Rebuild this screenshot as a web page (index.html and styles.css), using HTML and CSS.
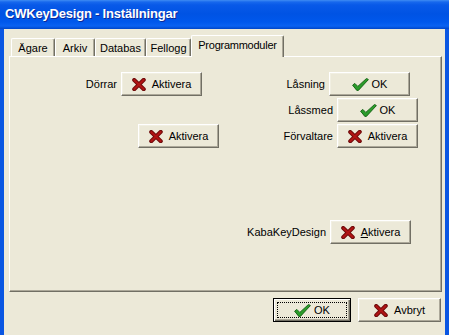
FILE: index.html
```html
<!DOCTYPE html>
<html lang="sv">
<head>
<meta charset="UTF-8" />
<meta name="viewport" content="width=device-width, initial-scale=1" />
<title>CWKeyDesign - Inställningar</title>
<link rel="stylesheet" href="styles.css">
</head>
<body>
  <div class="window">
    <div class="titlebar">CWKeyDesign - Inställningar</div>

    <div class="client">
      <div class="tabs">
        <div class="tab tab-agare">Ägare</div>
        <div class="tab tab-arkiv">Arkiv</div>
        <div class="tab tab-databas">Databas</div>
        <div class="tab tab-fellogg">Fellogg</div>
        <div class="tab tab-moduler active">Programmoduler</div>
      </div>

      <div class="panel">
        <div class="col col-left">
          <div class="field f-dorrar">
            <span class="label">Dörrar</span>
            <button class="btn"><svg class="ico-x" width="14" height="13" viewBox="0 0 14 13"><path d="M2.2 2 L11.8 11.2 M11.8 1.8 L2.2 11.2" stroke="#6e0b0b" stroke-width="4" stroke-linecap="round"/><path d="M2.4 2.2 L11.6 11 M11.6 2 L2.4 11" stroke="#b01414" stroke-width="2.2" stroke-linecap="round"/></svg>Aktivera</button>
          </div>
          <div class="field f-lone">
            <button class="btn"><svg class="ico-x" width="14" height="13" viewBox="0 0 14 13"><path d="M2.2 2 L11.8 11.2 M11.8 1.8 L2.2 11.2" stroke="#6e0b0b" stroke-width="4" stroke-linecap="round"/><path d="M2.4 2.2 L11.6 11 M11.6 2 L2.4 11" stroke="#b01414" stroke-width="2.2" stroke-linecap="round"/></svg>Aktivera</button>
          </div>
        </div>

        <div class="col col-right">
          <div class="field f-lasning">
            <span class="label">Låsning</span>
            <button class="btn btn-ok"><svg class="ico-check" width="17" height="13" viewBox="0 0 17 13"><polygon points="0.6,7.2 2.8,5.4 5.8,8.4 14.6,0.4 16.4,1.6 6.4,12.4 4.8,12.4" fill="#2a9c2a" stroke="#115d11" stroke-width="0.9" stroke-linejoin="round"/></svg>OK</button>
          </div>
          <div class="field f-lassmed">
            <span class="label">Låssmed</span>
            <button class="btn btn-ok"><svg class="ico-check" width="17" height="13" viewBox="0 0 17 13"><polygon points="0.6,7.2 2.8,5.4 5.8,8.4 14.6,0.4 16.4,1.6 6.4,12.4 4.8,12.4" fill="#2a9c2a" stroke="#115d11" stroke-width="0.9" stroke-linejoin="round"/></svg>OK</button>
          </div>
          <div class="field f-forvaltare">
            <span class="label">Förvaltare</span>
            <button class="btn"><svg class="ico-x" width="14" height="13" viewBox="0 0 14 13"><path d="M2.2 2 L11.8 11.2 M11.8 1.8 L2.2 11.2" stroke="#6e0b0b" stroke-width="4" stroke-linecap="round"/><path d="M2.4 2.2 L11.6 11 M11.6 2 L2.4 11" stroke="#b01414" stroke-width="2.2" stroke-linecap="round"/></svg>Aktivera</button>
          </div>
          <div class="field f-kaba">
            <span class="label">KabaKeyDesign</span>
            <button class="btn"><svg class="ico-x" width="14" height="13" viewBox="0 0 14 13"><path d="M2.2 2 L11.8 11.2 M11.8 1.8 L2.2 11.2" stroke="#6e0b0b" stroke-width="4" stroke-linecap="round"/><path d="M2.4 2.2 L11.6 11 M11.6 2 L2.4 11" stroke="#b01414" stroke-width="2.2" stroke-linecap="round"/></svg><span><u>A</u>ktivera</span></button>
          </div>
        </div>
      </div>

      <div class="actions">
        <button class="btn btn-default"><span class="focus"><svg class="ico-check" width="17" height="13" viewBox="0 0 17 13"><polygon points="0.6,7.2 2.8,5.4 5.8,8.4 14.6,0.4 16.4,1.6 6.4,12.4 4.8,12.4" fill="#2a9c2a" stroke="#115d11" stroke-width="0.9" stroke-linejoin="round"/></svg>OK</span></button>
        <button class="btn btn-cancel"><svg class="ico-x" width="14" height="13" viewBox="0 0 14 13"><path d="M2.2 2 L11.8 11.2 M11.8 1.8 L2.2 11.2" stroke="#6e0b0b" stroke-width="4" stroke-linecap="round"/><path d="M2.4 2.2 L11.6 11 M11.6 2 L2.4 11" stroke="#b01414" stroke-width="2.2" stroke-linecap="round"/></svg>Avbryt</button>
      </div>
    </div>
  </div>
</body>
</html>
```

FILE: styles.css
```css
/* Base */
* {
  box-sizing: border-box;
}
html, body {
  margin: 0;
  padding: 0;
  width: 449px;
  height: 335px;
  overflow: hidden;
  background: #ece9d8;
}
body {
  font-family: 'Liberation Sans', Arial, sans-serif;
  font-size: 11px;
  color: #000;
}

/* Window frame */
.window {
  display: flex;
  flex-direction: column;
  height: 335px;
  background: #0a56e2;
}

.titlebar {
  height: 29px;
  padding: 5px 0 0 5px;
  color: #fff;
  font-weight: 700;
  font-size: 13px;
  line-height: 18px;
  letter-spacing: -0.2px;
  text-shadow: 1px 1px 0 #0c2a98;
  background: linear-gradient(180deg, #3f8cf3 0, #1768ed 2px, #0859e8 5px, #0053e4 14px, #0058ec 22px, #0a62f2 26px, #0046c8 29px);
}

.client {
  flex: 1;
  margin: 0 4px;
  padding: 6px 3px 0 5px;
  background: #ece9d8;
}

/* Tabs */
.tabs {
  display: flex;
  align-items: flex-end;
  height: 21px;
  padding-left: 2px;
  position: relative;
  z-index: 1;
}
.tab {
  height: 18px;
  text-align: center;
  line-height: 18px;
  border-top: 1px solid #fff;
  border-left: 1px solid #fff;
  border-right: 1px solid #716f64;
  box-shadow: inset -1px 0 0 #aca899;
  border-radius: 2px 2px 0 0;
  background: #ece9d8;
}
.tab-agare { width: 44px; }
.tab-arkiv { width: 40px; }
.tab-databas { width: 51px; }
.tab-fellogg { width: 45px; }
.tab-moduler {
  width: 93px;
  letter-spacing: -0.25px;
}
.tab.active {
  height: 22px;
  margin-bottom: -1px;
  line-height: 19px;
}

/* Panel */
.panel {
  display: flex;
  height: 236px;
  border-top: 1px solid #fff;
  border-left: 1px solid #fff;
  border-right: 1px solid #716f64;
  border-bottom: 1px solid #716f64;
  box-shadow: inset -1px -1px 0 #aca899;
}

.col {
  display: flex;
  flex-direction: column;
  padding-top: 15px;
}
.col-left {
  width: 209px;
}
.col-right {
  flex: 1;
}

.field {
  display: flex;
  justify-content: flex-end;
  align-items: center;
  gap: 4px;
}
.f-dorrar { margin-right: 17px; }
.f-lone { margin-top: 28px; }
.f-lasning { margin-right: 31px; }
.f-lassmed { margin-top: 2px; margin-right: 23px; }
.f-forvaltare { margin-top: 2px; margin-right: 23px; }
.f-kaba { margin-top: 72px; margin-right: 30px; }

/* Buttons */
.btn {
  display: flex;
  align-items: center;
  justify-content: center;
  gap: 6px;
  width: 81px;
  height: 24px;
  padding: 0;
  font: inherit;
  color: #000;
  background: #ece9d8;
  border: 1px solid;
  border-color: #fff #716f64 #716f64 #fff;
  box-shadow: inset -1px -1px 0 #aca899, inset 1px 1px 0 #f1efe2;
}
.btn-ok {
  gap: 3px;
}

.actions {
  display: flex;
  justify-content: flex-end;
  gap: 7px;
  margin-top: 6px;
  padding-right: 1px;
}
.btn-default {
  width: 78px;
  padding: 3px;
  border: 1px solid #000;
  box-shadow: inset 1px 1px 0 #fff, inset -1px -1px 0 #716f64, inset -2px -2px 0 #aca899;
}
.btn-default .focus {
  flex: 1;
  align-self: stretch;
  display: flex;
  align-items: center;
  justify-content: center;
  gap: 3px;
  border: 1px dotted #000;
}
.btn-cancel {
  width: 83px;
}
```
